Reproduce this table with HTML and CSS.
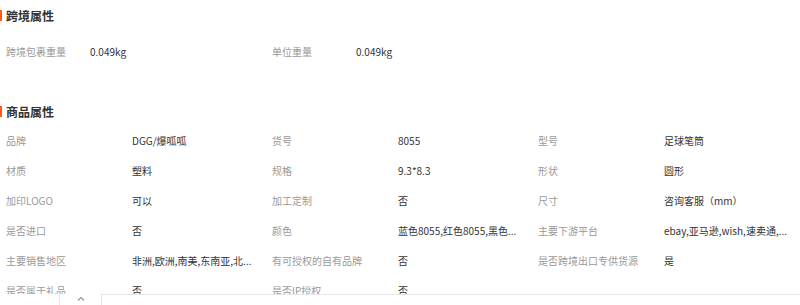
FILE: index.html
```html
<!DOCTYPE html>
<html lang="zh">
<head>
<meta charset="utf-8">
<link rel="stylesheet" href="styles.css">
</head>
<body>
<div class="page">
  <div class="section-title first"><span class="bar"></span>跨境属性</div>
  <div class="cb-row">
    <div class="cb-item"><span class="cb-label">跨境包裹重量</span><span class="val">0.049kg</span></div>
    <div class="cb-item"><span class="cb-label">单位重量</span><span class="val">0.049kg</span></div>
  </div>

  <div class="section-title second"><span class="bar"></span>商品属性</div>
  <div class="grid">
    <div class="item"><span class="label">品牌</span><span class="val">DGG/爆呱呱</span></div>
    <div class="item"><span class="label">货号</span><span class="val">8055</span></div>
    <div class="item"><span class="label">型号</span><span class="val">足球笔筒</span></div>

    <div class="item"><span class="label">材质</span><span class="val">塑料</span></div>
    <div class="item"><span class="label">规格</span><span class="val">9.3*8.3</span></div>
    <div class="item"><span class="label">形状</span><span class="val">圆形</span></div>

    <div class="item"><span class="label">加印LOGO</span><span class="val">可以</span></div>
    <div class="item"><span class="label">加工定制</span><span class="val">否</span></div>
    <div class="item"><span class="label">尺寸</span><span class="val">咨询客服（mm）</span></div>

    <div class="item"><span class="label">是否进口</span><span class="val">否</span></div>
    <div class="item"><span class="label">颜色</span><span class="val">蓝色8055,红色8055,黑色...</span></div>
    <div class="item"><span class="label">主要下游平台</span><span class="val">ebay,亚马逊,wish,速卖通,...</span></div>

    <div class="item"><span class="label">主要销售地区</span><span class="val">非洲,欧洲,南美,东南亚,北...</span></div>
    <div class="item"><span class="label">有可授权的自有品牌</span><span class="val">否</span></div>
    <div class="item"><span class="label">是否跨境出口专供货源</span><span class="val">是</span></div>

    <div class="item"><span class="label">是否属于礼品</span><span class="val">否</span></div>
    <div class="item"><span class="label">是否IP授权</span><span class="val">否</span></div>
    <div class="item"><span class="label"></span><span class="val"></span></div>
  </div>
</div>

<div class="bottom-bar">
  <div class="spacer"></div>
  <div class="tab">
    <svg width="8" height="5" viewBox="0 0 8 5"><polyline points="1,4.5 4,1.5 7,4.5" fill="none" stroke="#7f9bb5" stroke-width="1.2"/></svg>
  </div>
  <div class="box"></div>
</div>
</body>
</html>
```
FILE: styles.css
```css
html, body {
  margin: 0;
  padding: 0;
  background: #fff;
}
body {
  font-family: "Noto Sans CJK SC", "Noto Sans", "Liberation Sans", sans-serif;
  font-size: 10px;
  color: #333;
  width: 800px;
  height: 305px;
  overflow: hidden;
}
.section-title {
  display: flex;
  align-items: center;
  gap: 4px;
  height: 20px;
  font-size: 12px;
  font-weight: bold;
  color: #333;
}
.section-title.first { margin-top: 5px; }
.section-title.second { margin-top: 34px; }
.bar {
  display: inline-block;
  width: 2px;
  height: 11px;
  background: #ff5a1f;
}
.cb-row {
  display: flex;
  margin-top: 12px;
  padding-left: 6px;
}
.cb-item {
  display: flex;
  width: 266px;
  height: 30px;
  line-height: 30px;
}
.cb-label {
  width: 84px;
  color: #999;
}
.grid {
  display: grid;
  grid-template-columns: 266px 266px 266px;
  margin-top: 5px;
  padding-left: 6px;
}
.item {
  display: flex;
  height: 30px;
  line-height: 30px;
  min-width: 0;
}
.label {
  flex: 0 0 126px;
  color: #999;
  white-space: nowrap;
}
.val {
  color: #333;
  white-space: nowrap;
}
.bottom-bar {
  position: fixed;
  left: 0;
  right: 0;
  bottom: 0;
  height: 11px;
  background: #fff;
  display: flex;
}
.spacer {
  width: 59px;
}
.tab {
  width: 42px;
  box-sizing: border-box;
  border-left: 1px solid #e6e6e6;
  display: flex;
  justify-content: center;
  padding-top: 2px;
}
.tab svg { display: block; }
.box {
  flex: 1;
  border-top: 1px solid #e6e6e6;
  border-left: 1px solid #e6e6e6;
}
```
